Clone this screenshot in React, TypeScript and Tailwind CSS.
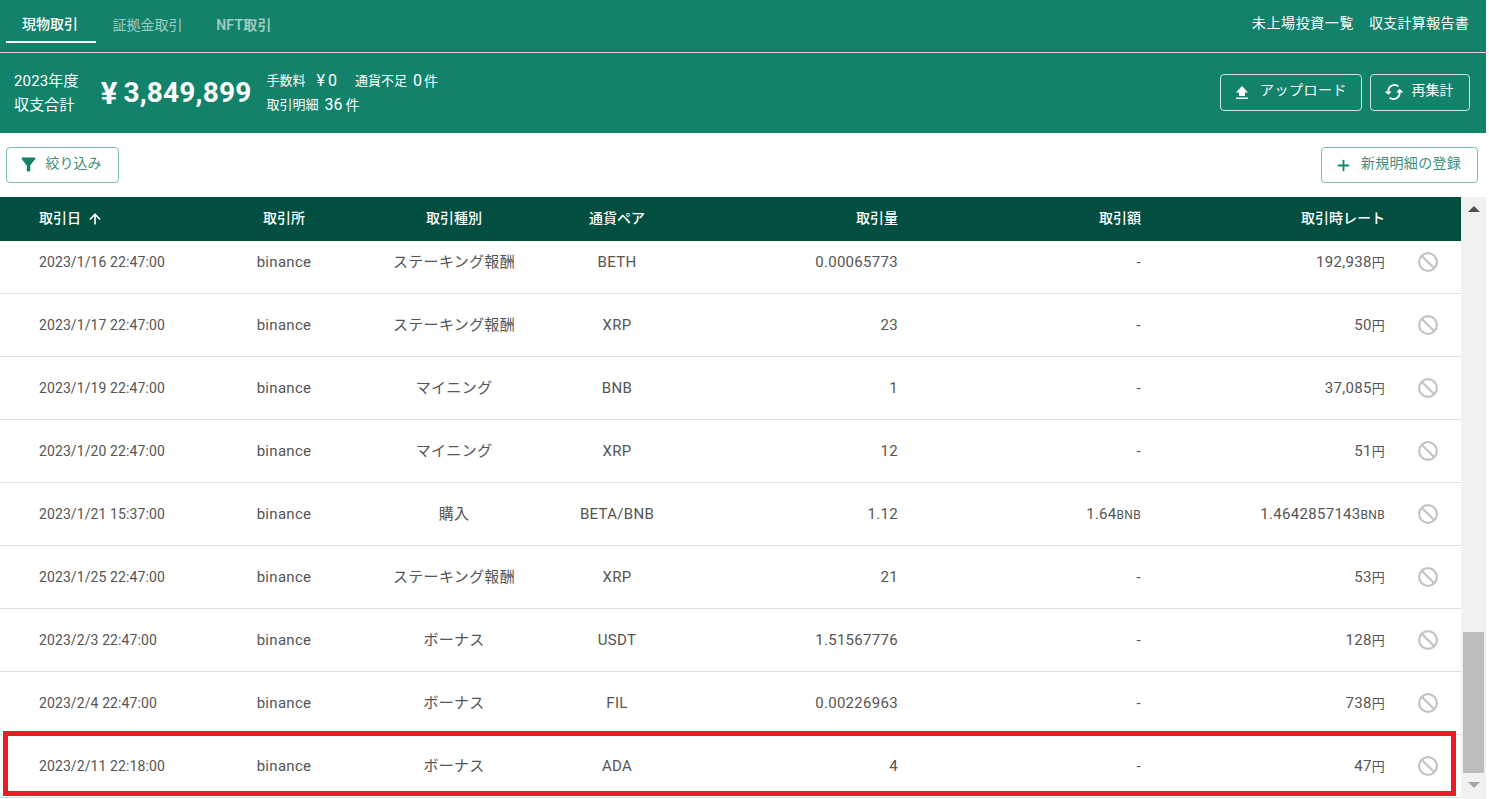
import { ArrowUp, Plus } from "lucide-react";

const rows = [
  ["2023/1/16 22:47:00", "ステーキング報酬", "BETH", "0.00065773", "-", "192,938", "円"],
  ["2023/1/17 22:47:00", "ステーキング報酬", "XRP", "23", "-", "50", "円"],
  ["2023/1/19 22:47:00", "マイニング", "BNB", "1", "-", "37,085", "円"],
  ["2023/1/20 22:47:00", "マイニング", "XRP", "12", "-", "51", "円"],
  ["2023/1/21 15:37:00", "購入", "BETA/BNB", "1.12", "1.64", "1.4642857143", "BNB"],
  ["2023/1/25 22:47:00", "ステーキング報酬", "XRP", "21", "-", "53", "円"],
  ["2023/2/3 22:47:00", "ボーナス", "USDT", "1.51567776", "-", "128", "円"],
  ["2023/2/4 22:47:00", "ボーナス", "FIL", "0.00226963", "-", "738", "円"],
  ["2023/2/11 22:18:00", "ボーナス", "ADA", "4", "-", "47", "円"],
];

const grid = "grid grid-cols-[200px_168px_172px_154px_204px_243px_244px_76px] items-center";

function UploadIcon() {
  return (
    <svg width="14" height="15" viewBox="0 0 14 15" fill="white">
      <path d="M7 1 L13 7.5 H10 V11 H4 V7.5 H1 Z" />
      <rect x="1" y="12.5" width="12" height="1.5" />
    </svg>
  );
}

function SyncIcon() {
  return (
    <svg width="20" height="18" viewBox="0 0 18 16" fill="none" stroke="white" strokeWidth="1.6">
      <path d="M4 8 a5.5 5.5 0 0 1 9 -5" />
      <path d="M14 8 a5.5 5.5 0 0 1 -9 5" />
      <path d="M0.5 7.5 H7 L4 10.5 Z" fill="white" stroke="none" />
      <path d="M11 8.5 H17.5 L14 5 Z" fill="white" stroke="none" />
    </svg>
  );
}

function BlockIcon() {
  return (
    <svg width="24" height="24" viewBox="0 0 24 24" fill="none" stroke="#c4c4c4" strokeWidth="2.2">
      <circle cx="12" cy="12" r="8.9" />
      <path d="M5.7 5.7 L18.3 18.3" />
    </svg>
  );
}

function FilterIcon() {
  return (
    <svg width="21" height="21" viewBox="0 0 24 24" fill="#12826b">
      <path d="M4.25 5.61C6.27 8.2 10 13 10 13v6c0 .55.45 1 1 1h2c.55 0 1-.45 1-1v-6s3.72-4.8 5.74-7.39c.51-.66.04-1.61-.79-1.61H5.04c-.83 0-1.3.95-.79 1.61z" />
    </svg>
  );
}

function Row({ row }: { row: string[] }) {
  return (
    <div className={`${grid} h-[63px] border-b border-[#e0e0e0] text-[15px] tracking-[0.02em] text-[#555]`}>
      <div className="pl-[39px] text-[14px] tracking-[0.1px]">{row[0]}</div>
      <div className="text-center">binance</div>
      <div className="text-center">{row[1]}</div>
      <div className="text-center">{row[2]}</div>
      <div className="text-right">{row[3]}</div>
      <div className="text-right">
        {row[4]}
        {row[4] !== "-" && <span className="text-[12px]">BNB</span>}
      </div>
      <div className="text-right">
        {row[5]}
        <span className={row[6] === "円" ? "text-[13px]" : "text-[12px]"}>{row[6]}</span>
      </div>
      <div className="flex justify-end pr-[21px]">
        <BlockIcon />
      </div>
    </div>
  );
}

export default function App() {
  return (
    <div className="relative h-[799px] w-[1489px] overflow-hidden bg-white font-['Roboto','Noto_Sans_CJK_JP',sans-serif]">
      <div className="w-[1486px] bg-[#12826b] text-white">
        <div className="flex h-[53px] items-center justify-between border-b border-[#d5d5d5] pb-[5px] pr-[17px]">
          <div className="-mb-[5px] flex h-[52px] items-start pl-[6px] text-[14px] font-medium">
            <div className="flex h-[43px] w-[90px] items-center justify-center border-b-2 border-white pr-[2px] pt-[8px]">現物取引</div>
            <div className="flex h-[43px] w-[103px] items-center justify-center pt-[8px] font-normal text-white/60">証拠金取引</div>
            <div className="flex h-[43px] w-[90px] items-center justify-center pt-[8px] font-semibold tracking-[0.02em] text-white/60">NFT取引</div>
          </div>
          <div className="flex gap-[15px] text-[14px] tracking-[0.02em]">
            <span className="tracking-[0.6px]">未上場投資一覧</span>
            <span>収支計算報告書</span>
          </div>
        </div>
        <div className="flex h-[80px] items-center justify-between pl-[14px] pr-[16px]">
          <div className="flex items-center">
            <div className="text-[15px] leading-[24px] tracking-[0.01em]">
              2023年度
              <br />
              収支合計
            </div>
            <div className="ml-[22px] flex items-center text-[28px] font-bold tracking-[0.2px]">
              <span className="mr-[6px] text-[31px] leading-none">¥</span>3,849,899
            </div>
            <div className="ml-[15px] text-[13px] leading-[24px]">
              <div className="flex items-center">
                手数料<span className="ml-[11px] text-[16px]">¥</span>
                <span className="ml-[3px] text-[16px]">0</span>
                <span className="ml-[18px]">通貨不足</span>
                <span className="ml-[6px] text-[16px]">0</span>
                <span className="ml-[2px] text-[14px]">件</span>
              </div>
              <div className="flex items-center">
                取引明細<span className="ml-[6px] text-[16px]">36</span>
                <span className="ml-[3px] text-[14px]">件</span>
              </div>
            </div>
          </div>
          <div className="-mt-[2px] flex gap-2">
            <button className="flex h-[37px] w-[142px] items-center justify-center gap-[11px] rounded border border-white/80 text-[14px] tracking-[0.5px]">
              <UploadIcon />
              <span className="pb-[3px]">アップロード</span>
            </button>
            <button className="flex h-[37px] w-[100px] items-center justify-center gap-[8px] rounded border border-white/80 pr-[3px] text-[14px]">
              <SyncIcon />
              <span className="pb-[3px]">再集計</span>
            </button>
          </div>
        </div>
      </div>

      <div className="flex h-[64px] w-[1478px] items-center justify-between pl-[6px]">
        <button className="flex h-[36px] w-[113px] items-center justify-center gap-[7px] rounded border border-[#7fbfb0] pr-[6px] text-[14px] text-[#3f8f7d]">
          <span className="-mt-[2px]">
            <FilterIcon />
          </span>
          <span className="pb-[3px]">絞り込み</span>
        </button>
        <button className="flex h-[36px] w-[157px] items-center justify-center gap-[9px] rounded border border-[#7fbfb0] pr-[3px] text-[14px] tracking-[0.02em] text-[#3f8f7d]">
          <Plus size={17} strokeWidth={2.5} className="text-[#12826b]" />
          <span className="pb-[3px]">新規明細の登録</span>
        </button>
      </div>

      <div className="flex h-[602px] w-[1486px]">
        <div className="flex w-[1461px] flex-col">
          <div className={`${grid} h-[44px] shrink-0 bg-[#024f42] pb-[1px] text-[14px] font-medium text-white`}>
            <div className="flex items-center gap-[6px] pl-[39px]">
              取引日
              <ArrowUp size={16} strokeWidth={2.5} />
            </div>
            <div className="text-center">取引所</div>
            <div className="text-center">取引種別</div>
            <div className="text-center">通貨ペア</div>
            <div className="text-right">取引量</div>
            <div className="text-right">取引額</div>
            <div className="text-right">取引時レート</div>
            <div />
          </div>
          <div className="flex-1 overflow-hidden">
            <div className="-mt-[10px]">
              {rows.map((r) => (
                <Row key={r[0]} row={r} />
              ))}
            </div>
          </div>
        </div>
        <div className="flex w-[25px] flex-col items-center bg-[#f1f1f1] pl-[2px] pr-[2px]">
          <div className="mt-[9px] h-0 w-0 border-x-[6px] border-b-[6px] border-x-transparent border-b-[#505050]" />
          <div className="mt-[420px] h-[141px] w-[21px] bg-[#bdbdbd]" />
          <div className="mt-[9px] h-0 w-0 border-x-[6px] border-t-[6px] border-x-transparent border-t-[#a3a3a3]" />
        </div>
      </div>

      <div className="absolute left-[3px] top-[731px] h-[65px] w-[1453px] border-[5px] border-[#ed1c24]" />
    </div>
  );
}
